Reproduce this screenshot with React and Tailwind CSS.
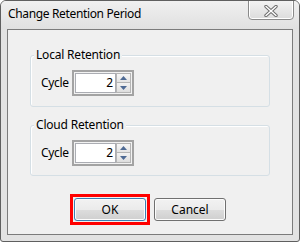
import React from "react";

function Spin() {
  return (
    <div className="flex border-2 border-[#a3a3a3] p-px bg-[#f2f2f2]">
      <div className="w-[41px] h-[20px] border border-[#abadb3] bg-white flex items-center justify-end pr-[2px] text-[12px] leading-none text-black">
        2
      </div>
      <div className="w-[15px] h-[20px] flex flex-col">
        <div className="h-[10px] border border-[#b5b5b5] bg-gradient-to-b from-[#f7f7f7] to-[#e4e4e4] flex items-center justify-center">
          <svg width="7" height="4" viewBox="0 0 7 4"><path d="M3.5 0 L7 4 L0 4 Z" fill="#4e6a94" /></svg>
        </div>
        <div className="h-[10px] border border-t-0 border-[#b5b5b5] bg-gradient-to-b from-[#f2f2f2] to-[#dedede] flex items-center justify-center">
          <svg width="7" height="4" viewBox="0 0 7 4"><path d="M0 0 L7 0 L3.5 4 Z" fill="#4e6a94" /></svg>
        </div>
      </div>
    </div>
  );
}

function Group({ title, h, mt }) {
  return (
    <div
      className={`relative ml-[22px] w-[240px] ${h} ${mt} rounded-[3px] border border-[#d5dfe5] shadow-[inset_1px_1px_0_#ffffff]`}
    >
      <span className="absolute left-[3px] top-[-9px] px-[2px] bg-[#f0f0f0] text-[12px] leading-[16px] tracking-[-0.2px] text-black">
        {title}
      </span>
      <div className="flex items-center pl-[10px] pt-[14px]">
        <span className="w-[31px] text-[12px] leading-[16px] tracking-[-0.3px] text-black">Cycle</span>
        <Spin />
      </div>
    </div>
  );
}

function Btn({ children, def }) {
  return (
    <div
      className={`w-[72px] h-[23px] rounded-[3px] border ${def ? "border-[#3c7fb1]" : "border-[#707070]"} flex items-center justify-center text-[12px] text-black bg-[linear-gradient(to_bottom,#f2f2f2_0%,#ebebeb_50%,#dddddd_51%,#cfcfcf_100%)] shadow-[inset_0_0_0_1px_#fcfcfc]`}
    >
      {children}
    </div>
  );
}

export default function App() {
  return (
    <div
      className="w-[300px] h-[242px] rounded-t-[6px] rounded-b-[3px] border border-[#5f5f5f] bg-[#e2e2e2] flex flex-col relative overflow-hidden"
      style={{ fontFamily: '"Noto Sans", "Open Sans", sans-serif' }}
    >
      <div className="h-[28px] flex items-start bg-gradient-to-b from-[#f0f0f0] to-[#e0e0e0] relative">
        <span className="ml-[7px] mt-[5px] text-[12px] leading-[16px] tracking-[-0.35px] text-black">
          Change Retention Period
        </span>
        <div className="absolute right-[5px] top-[-2px] w-[46px] h-[21px] rounded-b-[4px] border border-[#8a8a8a] bg-gradient-to-b from-[#f4f4f4] to-[#dcdcdc] shadow-[inset_0_0_0_1px_#ffffff] flex items-center justify-center pt-[2px]">
          <svg width="14" height="12" viewBox="0 0 14 12">
            <path d="M2 1.5 L12 10.5 M12 1.5 L2 10.5" stroke="#6e6e6e" strokeWidth="3.4" strokeLinecap="round" />
            <path d="M2 1.5 L12 10.5 M12 1.5 L2 10.5" stroke="#ffffff" strokeWidth="1.4" strokeLinecap="round" />
          </svg>
        </div>
      </div>
      <div className="mx-[6px] h-[206px] border border-[#7b7b7b] bg-[#f0f0f0] flex flex-col">
        <Group title="Local Retention" h="h-[52px]" mt="mt-[25px]" />
        <Group title="Cloud Retention" h="h-[51px]" mt="mt-[18px]" />
        <div className="flex ml-[62px] mt-[18px] gap-[4px] items-start">
          <div className="border-[3px] border-[#ff0000] p-px">
            <Btn def>OK</Btn>
          </div>
          <div className="mt-[4px]">
            <Btn>Cancel</Btn>
          </div>
        </div>
      </div>
    </div>
  );
}
